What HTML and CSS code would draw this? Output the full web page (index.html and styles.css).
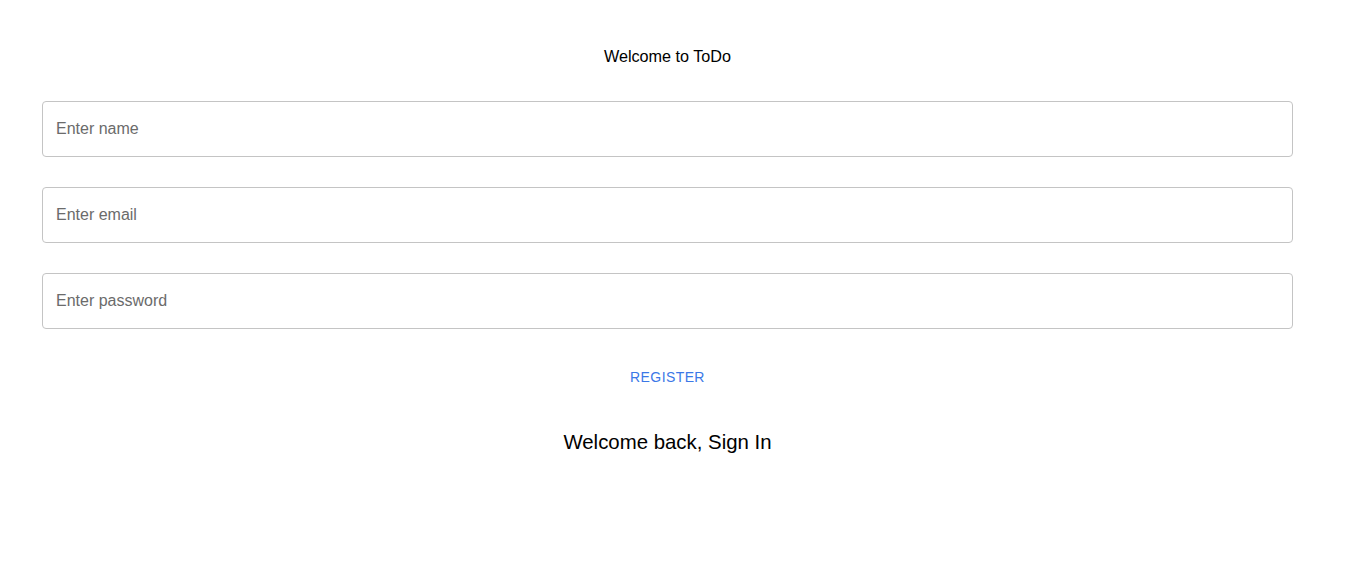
FILE: index.html
```html
<!DOCTYPE html>
<html>
<head>
<meta charset="utf-8">
<link rel="stylesheet" href="styles.css">
</head>
<body>
<main class="page">
  <h1 class="title">Welcome to ToDo</h1>
  <form class="form">
    <input class="field" type="text" placeholder="Enter name">
    <input class="field" type="email" placeholder="Enter email">
    <input class="field" type="password" placeholder="Enter password">
    <button class="register" type="button">Register</button>
  </form>
  <h2 class="signin">Welcome back, Sign In</h2>
</main>
</body>
</html>
```
FILE: styles.css
```css
* { box-sizing: border-box; }
html, body { margin: 0; padding: 0; background: #fff; }
body { font-family: "Liberation Sans", Arial, sans-serif; color: #000; }
.page {
  width: 1251px;
  margin-left: 42px;
  display: flex;
  flex-direction: column;
  align-items: center;
  padding-top: 46px;
}
.title {
  margin: 0;
  font-size: 16.2px;
  font-weight: 400;
  line-height: 20px;
}
.form {
  width: 100%;
  display: flex;
  flex-direction: column;
  gap: 30px;
  margin-top: 35px;
}
.field {
  width: 100%;
  height: 56px;
  border: 1px solid #c4c4c4;
  border-radius: 4px;
  padding: 0 13px;
  font-family: "Liberation Sans", Arial, sans-serif;
  font-size: 16px;
  color: #222;
  outline: none;
  background: #fff;
}
.field::placeholder { color: #6b6b6b; opacity: 1; }
.register {
  align-self: center;
  background: none;
  border: none;
  font-family: "Liberation Sans", Arial, sans-serif;
  font-size: 14px;
  letter-spacing: 0.4px;
  text-transform: uppercase;
  color: #3b78e7;
  padding: 6px 8px;
  line-height: 20px;
  margin-top: 2px;
  cursor: pointer;
}
.signin {
  margin: 0;
  margin-top: 37px;
  font-size: 20.4px;
  font-weight: 400;
  line-height: 24px;
}
```
